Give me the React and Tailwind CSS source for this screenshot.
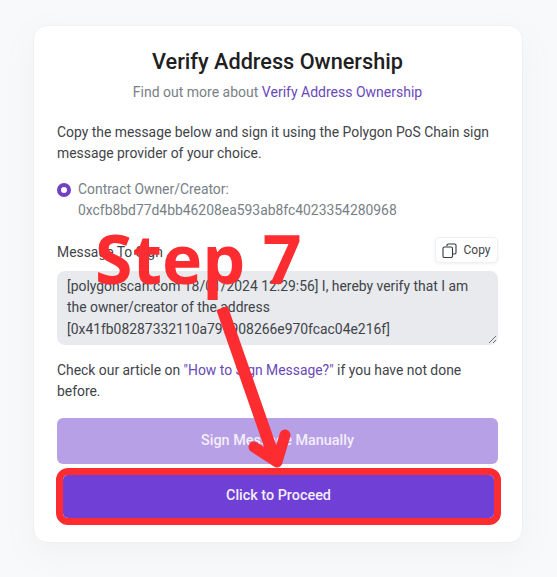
const font = { fontFamily: "Roboto, sans-serif" };

function CopyIcon() {
  return (
    <svg width="15" height="15" viewBox="0 0 15 15" fill="none" stroke="#343a40" strokeWidth="1.1">
      <path d="M5 3.2V2.2C5 1.5 5.5 1 6.2 1H12.8C13.5 1 14 1.5 14 2.2V9.8C14 10.5 13.5 11 12.8 11H10.5" />
      <rect x="1" y="4" width="9.5" height="10.5" rx="1.4" />
    </svg>
  );
}

export default function App() {
  return (
    <div className="relative h-[577px] w-[557px] overflow-hidden bg-[#f8f9fa] pt-[25px]" style={font}>
      <div className="ml-[33px] h-[518px] w-[490px] rounded-[14px] border border-[#eef0f3] bg-white pt-[21px] pr-[24px] pl-[23px] shadow-[0_10px_30px_rgba(140,152,164,0.08)]">
        <h1 className="text-center text-[21.7px] leading-[30px] font-medium text-[#1e2022]">Verify Address Ownership</h1>
        <p className="mt-[5px] text-center text-[14px] leading-[20px] text-[#787f86]">
          Find out more about <span className="text-[#6a48b8]">Verify Address Ownership</span>
        </p>

        <p className="mt-[20px] text-[13.9px] leading-[20.5px] text-[#3f4449]">
          Copy the message below and sign it using the Polygon PoS Chain sign message provider of your choice.
        </p>

        <div className="mt-[16px] flex gap-[7px]">
          <span className="mt-[4px] h-[14px] w-[14px] shrink-0 rounded-full border-[4px] border-[#6f42c1] bg-white" />
          <p className="text-[13.9px] leading-[21px] text-[#787f86]">
            Contract Owner/Creator:
            <br />
            0xcfb8bd77d4bb46208ea593ab8fc4023354280968
          </p>
        </div>

        <div className="mt-[16px] flex items-center justify-between">
          <span className="pt-[4px] text-[13.9px] text-[#3f4449]">Message To Sign</span>
          <button className="flex h-[26px] w-[63px] items-center justify-center gap-[6px] rounded-[5px] border border-[#eef0f3] bg-white text-[12px] text-[#3f4449] shadow-[0_1px_3px_rgba(140,152,164,0.15)]">
            <CopyIcon />
            Copy
          </button>
        </div>

        <div className="relative mt-[8px] h-[74px] rounded-[8px] bg-[#e8eaed] py-[5px] pl-[10px] text-[13.9px] leading-[21.3px] text-[#3f4449]">
          [polygonscan.com 18/01/2024 12:29:56] I, hereby verify that I am
          <br />
          the owner/creator of the address
          <br />
          [0x41fb08287332110a799908266e970fcac04e216f]
          <svg className="absolute right-[1px] bottom-[1px]" width="9" height="9" viewBox="0 0 9 9" stroke="#555" strokeWidth="0.8">
            <path d="M1 8L8 1M5 8L8 5" />
          </svg>
        </div>

        <p className="mt-[15px] text-[13.9px] leading-[21px] text-[#3f4449]">
          Check our article on <span className="text-[#6a48b8]">"How to Sign Message?"</span> if you have not done before.
        </p>

        <button className="mt-[16px] h-[46px] w-full rounded-[6px] bg-[#b7a0e6] text-[14.4px] font-medium text-[#f3eefc]">
          Sign Message Manually
        </button>
        <div className="mt-[4px] -mr-[3px] -ml-px rounded-[12px] border-[7px] border-[#fd2c30]">
          <button className="block h-[43px] w-full rounded-[5px] bg-[#6f3fd6] pb-[2px] text-[14.4px] font-medium text-[#f3eefc]">
            Click to Proceed
          </button>
        </div>
      </div>

      <span className="absolute top-[216px] left-[95px] text-[68px] leading-[84px] font-bold text-[#fd2c30]" style={{ fontFamily: "'Open Sans', sans-serif" }}>
        Step 7
      </span>
      <svg className="absolute top-[300px] left-[205px]" width="100" height="175" viewBox="0 0 100 175" fill="none" stroke="#fd2c30" strokeLinecap="round">
        <path d="M17 8L70 160" strokeWidth="12" strokeLinecap="butt" />
        <path d="M49 147L72 162L80 135" strokeWidth="11" strokeLinejoin="round" />
      </svg>
    </div>
  );
}
